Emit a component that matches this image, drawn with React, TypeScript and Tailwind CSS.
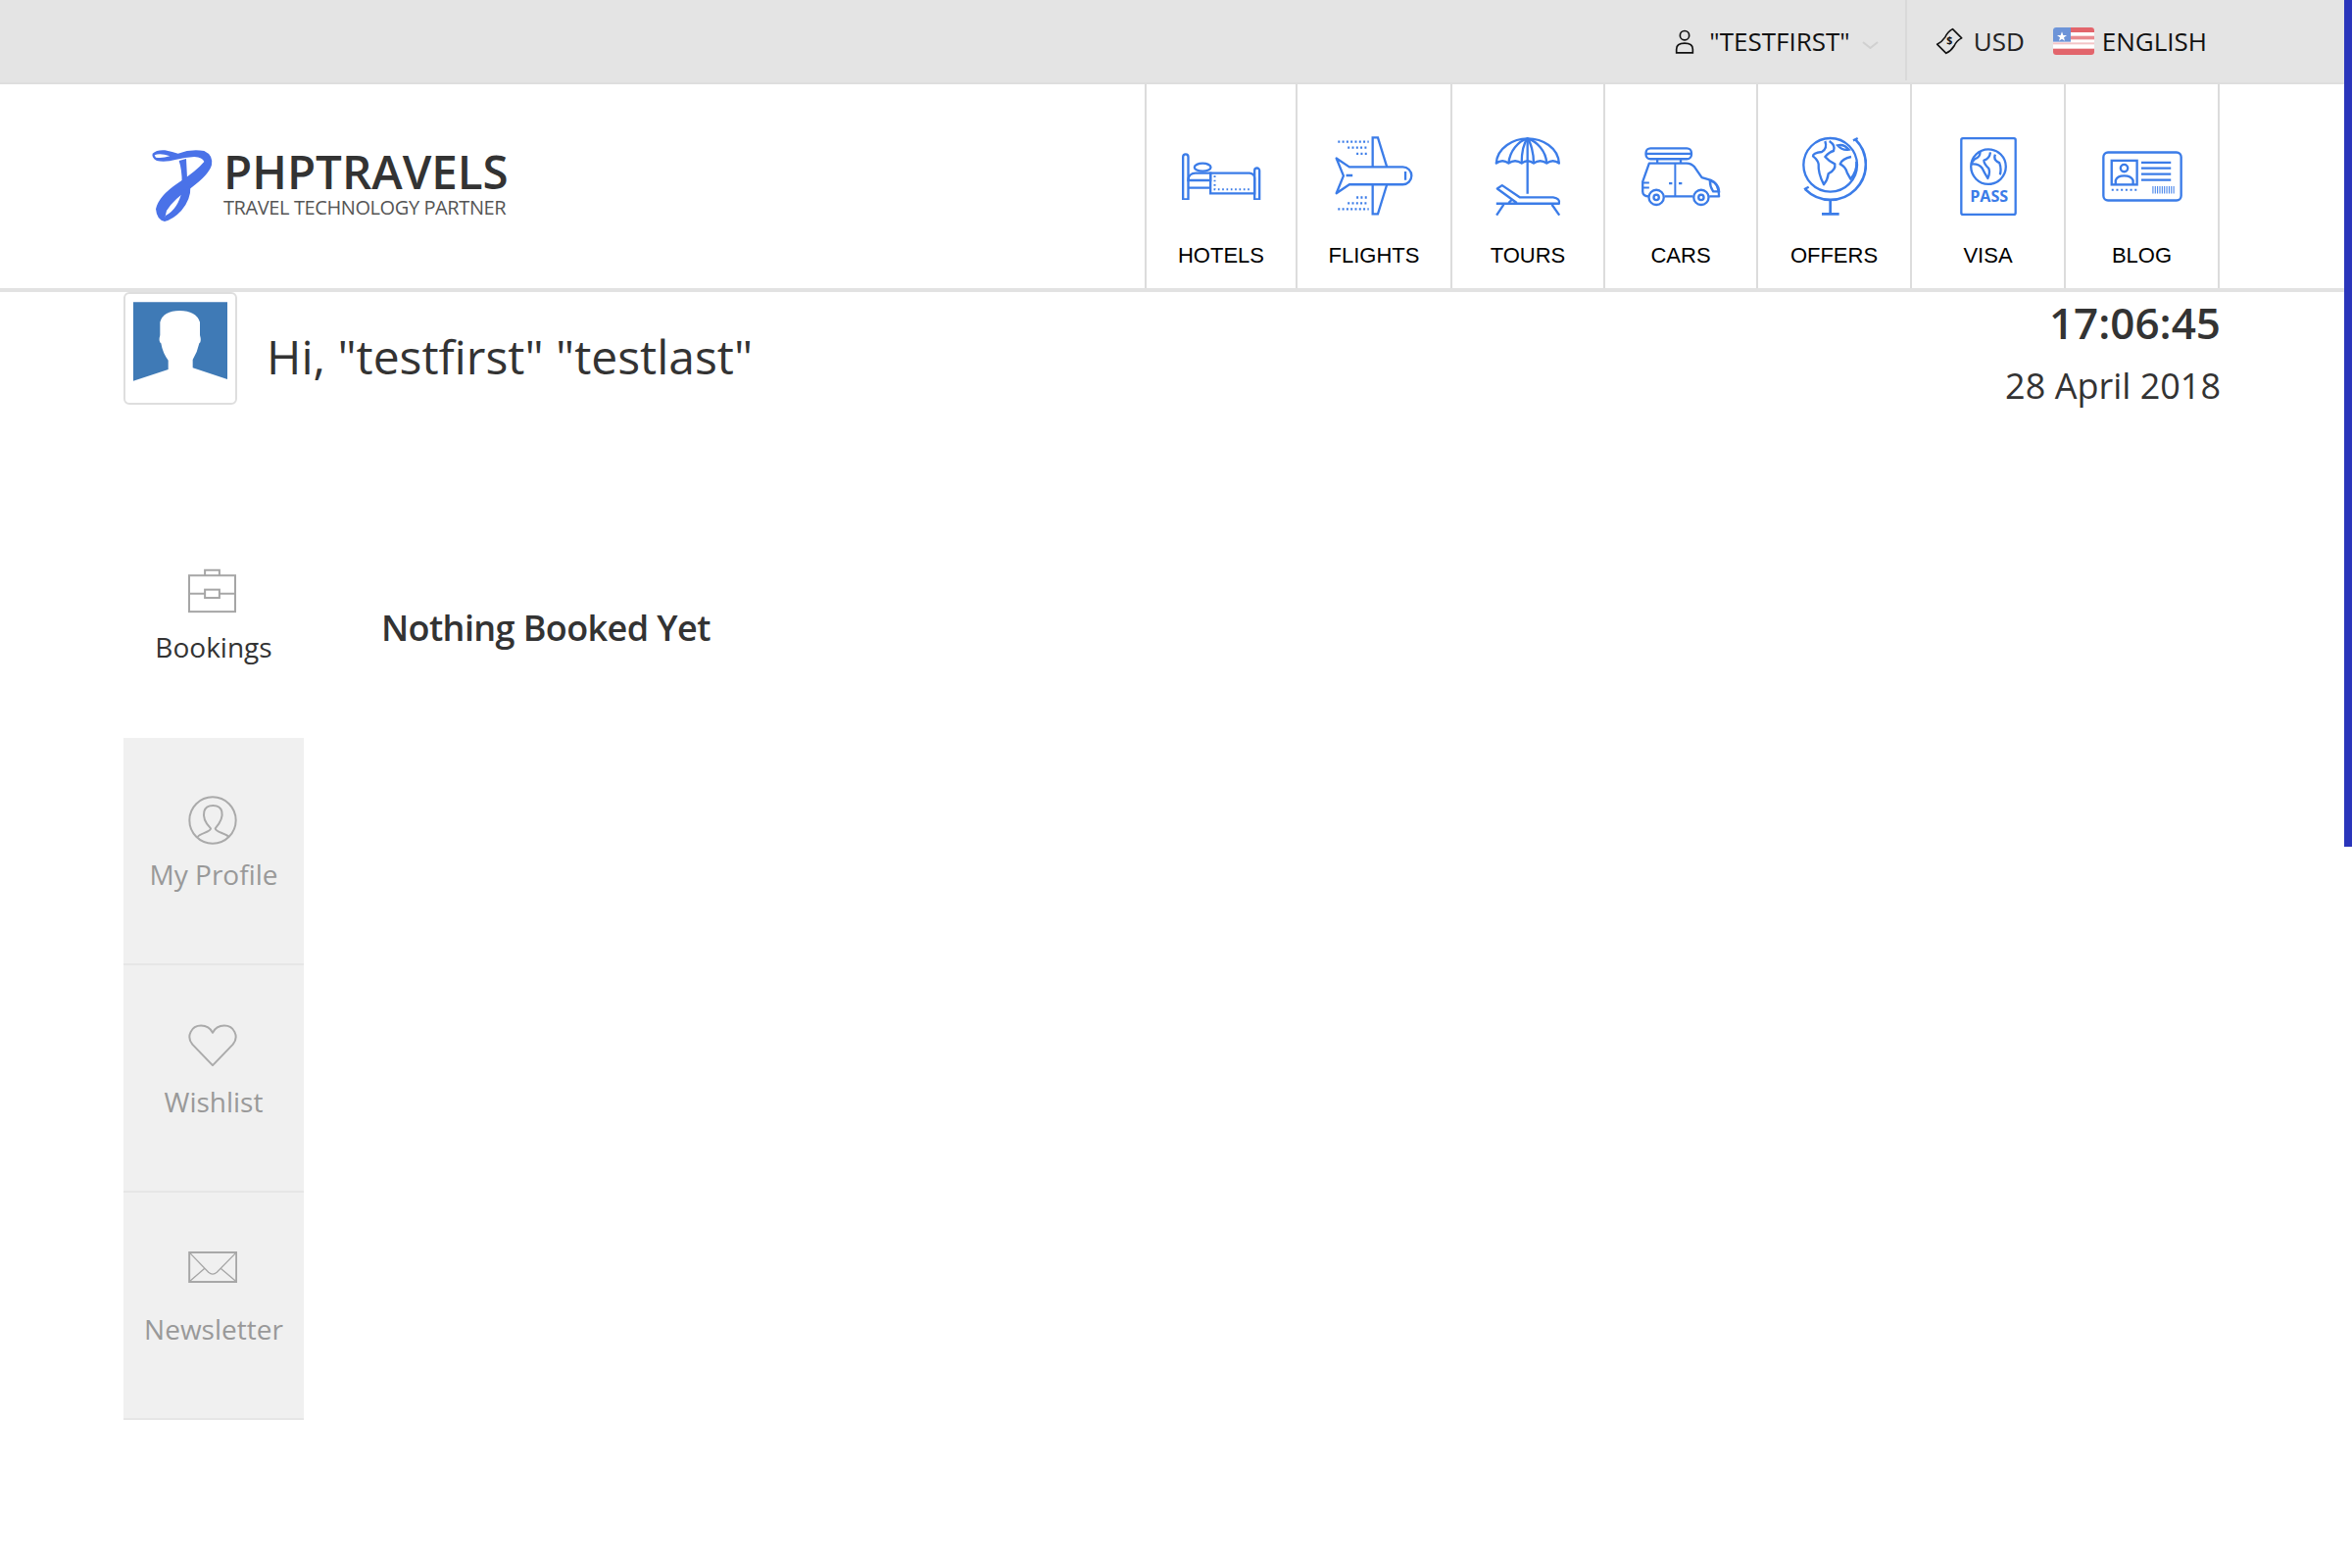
import React from 'react';

const navItems = [
  { label: 'HOTELS', width: 'w-[154px]', icon: <HotelIcon /> },
  { label: 'FLIGHTS', width: 'w-[158px]', icon: <PlaneIcon /> },
  { label: 'TOURS', width: 'w-[156px]', icon: <UmbrellaIcon /> },
  { label: 'CARS', width: 'w-[156px]', icon: <CarIcon /> },
  { label: 'OFFERS', width: 'w-[157px]', icon: <GlobeIcon /> },
  { label: 'VISA', width: 'w-[157px]', icon: <PassIcon /> },
  { label: 'BLOG', width: 'w-[159px]', icon: <CardIcon /> },
];

function HotelIcon() {
  return (
    <svg width="82" height="48" viewBox="135 228 245 144" fill="none" stroke="#3b7ce8" strokeWidth="7">
      <path d="M141 370V240a8 8 0 0 1 16 0V370Z" />
      <path d="M360 370V282a7.5 7.5 0 0 1 15 0V370Z" />
      <path d="M157 335H225M225 290H345Q360 292 360 305V352H225Z" />
      <path d="M157 312c0-14 10-22 22-22H225V312Z" />
      <ellipse cx="201" cy="272" rx="25" ry="12" fill="#fff" />
      <path d="M238 298V340H348" strokeWidth="6" strokeDasharray="5 8" />
    </svg>
  );
}

function PlaneIcon() {
  return (
    <svg width="80" height="82" viewBox="605 180 242 244" fill="none" stroke="#3b7ce8" strokeWidth="7">
      <path d="M650 273H815a27 27 0 0 1 0 54H650L610 354L632 300L610 246Z" strokeLinejoin="round" />
      <path d="M722 273V182H738L766 273M722 327V418H738L766 327" />
      <path d="M640 299H660M823 287V313" />
      <path d="M615 195H710M645 213H710M672 232H710M672 367H710M645 385H710M615 403H710" strokeDasharray="6 7" />
    </svg>
  );
}

function UmbrellaIcon() {
  return (
    <svg width="68" height="81" viewBox="1092 178 204 244" fill="none" stroke="#3b7ce8" strokeWidth="7">
      <path d="M1097 258C1100 210 1150 182 1193 182C1240 182 1287 210 1290 258Q1271 244 1252 258Q1232 244 1212 258Q1193 244 1175 258Q1155 244 1135 258Q1116 244 1097 258Z" strokeLinejoin="round" />
      <path d="M1135 258C1138 220 1165 190 1193 182C1221 190 1250 220 1252 258M1175 258C1175 225 1183 195 1193 182C1203 195 1212 225 1212 258" />
      <path d="M1193 182V352" />
      <path d="M1097 382H1290Q1294 366 1272 363H1170L1115 326L1100 336L1160 380" strokeLinejoin="round" />
      <path d="M1120 385L1098 418M1268 385L1291 418M1135 380L1145 370" />
    </svg>
  );
}

function CarIcon() {
  return (
    <svg width="82" height="61" viewBox="310 208 244 184" fill="none" stroke="#3b7ce8" strokeWidth="7">
      <rect x="325" y="212" width="140" height="33" rx="14" />
      <path d="M325 229H465M360 245V258M432 245V258" />
      <path d="M335 360Q315 360 315 345V315L335 258H450Q465 258 475 270L497 302L525 310Q550 320 550 360H520M470 360H382" strokeLinejoin="round" />
      <path d="M522 312Q548 318 550 345H532Q522 330 522 312Z" />
      <path d="M415 258V360M315 318H335M315 333H335" strokeWidth="6" />
      <circle cx="357" cy="363" r="23" fill="#fff" />
      <circle cx="357" cy="363" r="8" />
      <circle cx="495" cy="363" r="23" fill="#fff" />
      <circle cx="495" cy="363" r="8" />
      <path d="M396 320H406M426 320H436" />
    </svg>
  );
}

function GlobeIcon() {
  return (
    <svg width="66" height="82" viewBox="802 178 198 244" fill="none" stroke="#3b7ce8" strokeWidth="7">
      <circle cx="888" cy="265" r="82" />
      <path d="M965 187A108 108 0 0 1 812 340" strokeWidth="8" />
      <path d="M958 190L972 183M808 340L822 332" />
      <path d="M888 372V415M862 415H915" strokeWidth="8" />
      <path d="M872 192Q880 215 862 225Q835 228 835 238Q850 250 852 262Q850 290 868 325Q880 310 882 292Q905 280 902 262Q885 255 872 240Q885 225 898 222Q905 205 885 192" strokeLinejoin="round" />
      <path d="M910 205Q930 200 945 218Q925 222 910 205Z" />
      <path d="M952 240Q925 245 918 262Q935 270 940 290L950 308Q970 285 968 255" strokeLinejoin="round" />
    </svg>
  );
}

function PassIcon() {
  return (
    <svg width="58" height="82" viewBox="176 178 176 244" fill="none" stroke="#3b7ce8" strokeWidth="7">
      <rect x="180" y="182" width="168" height="236" rx="5" />
      <circle cx="264" cy="270" r="54" />
      <path d="M238 222Q240 240 222 246Q212 256 212 262Q235 260 245 275Q252 290 262 306Q270 290 265 275Q250 262 250 250Q268 245 270 225M285 232Q278 250 298 258Q305 275 300 295" strokeLinejoin="round" />
      <text x="266" y="380" textAnchor="middle" fill="#3b7ce8" stroke="none" fontSize="49" fontWeight="700" fontFamily="'Open Sans', sans-serif">PASS</text>
    </svg>
  );
}

function CardIcon() {
  return (
    <svg width="82" height="52" viewBox="616 223 244 154" fill="none" stroke="#3b7ce8" strokeWidth="7">
      <rect x="620" y="227" width="236" height="146" rx="14" />
      <rect x="645" y="252" width="77" height="73" />
      <circle cx="683" cy="275" r="11" />
      <path d="M657 325V312Q662 298 683 298Q704 298 710 312V325" />
      <path d="M735 258H825M735 275H825M735 293H825M735 311H825" />
      <path d="M645 341H722" strokeWidth="6" strokeDasharray="6 8" />
      <path d="M769 341H838" strokeWidth="22" strokeDasharray="3 4" />
    </svg>
  );
}

function Logo() {
  return (
    <svg width="80" height="95" viewBox="0 0 240 285" fill="#4a72e8">
      <path d="M32 50Q45 38 70 40Q95 45 110 50Q150 35 190 42Q218 55 213 85Q205 115 150 155Q95 190 75 225Q70 240 70 258Q45 255 42 220Q50 180 110 140Q165 105 190 75Q185 62 160 60Q130 62 105 68Q70 78 45 72Q28 62 32 50Z" />
      <path d="M38 55Q55 48 85 58Q60 66 42 62Z" fill="#fff" />
      <path d="M113 72L135 66L138 125L122 138Q122 100 113 72Z" />
      <path d="M122 165L148 150Q150 190 120 225Q95 252 68 258Q65 250 72 240Q110 220 122 165Z" />
    </svg>
  );
}

function UserIcon() {
  return (
    <svg width="20" height="25" viewBox="40 58 60 74" fill="none" stroke="#111" strokeWidth="5">
      <circle cx="70" cy="76" r="14" />
      <path d="M45 129V118Q45 100 70 100Q95 100 95 118V129Z" />
    </svg>
  );
}

function CurrencyIcon() {
  return (
    <svg width="29" height="29" viewBox="52 55 88 88" fill="none" stroke="#111" strokeWidth="5">
      <path d="M105 60L133 88Q118 95 110 112Q100 128 85 135L57 107Q72 100 82 85Q90 68 105 60Z" strokeLinejoin="round" />
      <text x="95" y="108" textAnchor="middle" fill="#111" stroke="none" fontSize="32" fontWeight="700" fontFamily="'Open Sans', sans-serif">$</text>
    </svg>
  );
}

function FlagIcon() {
  return (
    <svg width="42" height="28" viewBox="408 66 126 84" className="rounded-[3px]">
      <rect x="408" y="66" width="126" height="84" fill="#fff" />
      <rect x="462" y="66" width="72" height="15" fill="#e2656c" />
      <rect x="462" y="92" width="72" height="11" fill="#e98a8f" />
      <rect x="408" y="131" width="126" height="19" fill="#e2656c" />
      <rect x="408" y="112" width="126" height="6" fill="#f3c4c6" />
      <rect x="408" y="66" width="54" height="44" fill="#6d94d8" />
      <path d="M435 79L439 90H450L441 97L444 107L435 101L426 107L429 97L420 90H431Z" fill="#fff" />
    </svg>
  );
}

function BriefcaseIcon() {
  return (
    <svg width="49" height="46" viewBox="245 66 146 132" fill="none" stroke="#a6a6a6" strokeWidth="6">
      <rect x="248" y="85" width="140" height="110" />
      <path d="M296 85V69H340V85M248 140H296M340 140H388" />
      <rect x="296" y="128" width="44" height="25" />
    </svg>
  );
}

function ProfileIcon() {
  return (
    <svg width="50" height="50" viewBox="243 758 150 150" fill="none" stroke="#aaa" strokeWidth="6">
      <circle cx="318" cy="833" r="71" />
      <path d="M272 884C280 872 312 870 312 858C296 842 288 822 292 806C298 782 340 782 346 806C350 822 340 842 326 858C326 870 358 872 368 884" />
    </svg>
  );
}

function HeartIcon() {
  return (
    <svg width="50" height="44" viewBox="245 258 152 132" fill="none" stroke="#aaa" strokeWidth="6">
      <path d="M321 385L258 320C238 295 255 262 285 262C302 262 315 272 321 284C327 272 340 262 357 262C387 262 404 295 384 320Z" strokeLinejoin="round" />
    </svg>
  );
}

function EnvelopeIcon() {
  return (
    <svg width="50" height="32" viewBox="245 953 152 98" fill="none" stroke="#a6a6a6" strokeWidth="6">
      <rect x="248" y="956" width="147" height="92" />
      <path d="M250 958L308 1018Q321 1030 334 1018L393 958M250 1046L296 1006M393 1046L346 1006" strokeWidth="4" />
    </svg>
  );
}

function Silhouette() {
  return (
    <svg width="96" height="84" viewBox="108 564 288 250">
      <path d="M108 564H396V800L290 765V740Q305 715 310 690Q318 685 312 665V625Q300 590 250 590Q200 590 190 625V665Q184 685 193 690Q198 720 215 742V770L108 805Z" fill="#3f7ab6" />
    </svg>
  );
}

const sideItems = [
  { label: 'My Profile', icon: <ProfileIcon />, iconGap: 'pt-[60px]', textGap: 'mt-[11px]' },
  { label: 'Wishlist', icon: <HeartIcon />, iconGap: 'pt-[58px]', textGap: 'mt-[13px]' },
  { label: 'Newsletter', icon: <EnvelopeIcon />, iconGap: 'pt-[52px]', textGap: 'mt-[19px]' },
];

export default function App() {
  return (
    <div className="relative min-h-[1600px] bg-white font-['Open_Sans',sans-serif] text-[#333]">
      {/* page scrollbar */}
      <div className="absolute right-0 top-0 h-[864px] w-2 bg-[#2a35bb]" />

      {/* Top bar */}
      <div className="flex h-[86px] items-center justify-end border-b-2 border-[#dedede] bg-[#e4e4e4] pr-[148px] text-[26px] text-[#111]">
        <UserIcon />
        <span className="ml-[15px] whitespace-nowrap">"TESTFIRST"</span>
        <svg className="ml-[12px] mt-2" width="17" height="8" viewBox="0 0 17 8" fill="none" stroke="#d0d0d0" strokeWidth="2"><path d="M1 1L8.5 7L16 1" /></svg>
        <div className="ml-[27px] mr-[29px] h-[82px] w-0.5 self-start bg-[#d9d9d9]" />
        <CurrencyIcon />
        <span className="ml-[10px] whitespace-nowrap font-medium text-[#222]">USD</span>
        <span className="ml-[29px] flex"><FlagIcon /></span>
        <span className="ml-[8px] whitespace-nowrap">ENGLISH</span>
      </div>

      {/* Header */}
      <div className="flex h-[212px] items-stretch justify-between border-b-4 border-[#e2e2e2] pl-[145px] pr-[135px]">
        <div className="flex items-center pb-[6px]">
          <Logo />
          <div className="ml-[3px] flex flex-col">
            <span className="text-[47.5px] font-semibold leading-[50px] text-[#333]">PHPTRAVELS</span>
            <span className="text-[20px] leading-[24px] tracking-[-0.4px] text-[#555]">TRAVEL TECHNOLOGY PARTNER</span>
          </div>
        </div>
        <div className="flex">
          {navItems.map((item) => (
            <div key={item.label} className={`flex flex-col items-center border-l-2 border-[#dcdcdc] last:border-r-2 ${item.width}`}>
              <div className="mt-[54px] flex h-20 items-center justify-center">{item.icon}</div>
              <span className="mt-[28px] font-['Liberation_Sans',sans-serif] text-[22px] leading-[26px] text-black">{item.label}</span>
            </div>
          ))}
        </div>
      </div>

      {/* Welcome row */}
      <div className="flex items-start justify-between pl-[126px] pr-[134px]">
        <div className="flex items-center">
          <div className="h-[115px] w-[116px] rounded-md border-2 border-[#dedede] pl-2 pt-2">
            <Silhouette />
          </div>
          <h1 className="ml-[30px] mt-[16px] text-[48px] font-normal leading-none">Hi, "testfirst" "testlast"</h1>
        </div>
        <div className="flex flex-col items-end">
          <span className="mt-[3px] text-[44px] font-semibold leading-[56px]">17:06:45</span>
          <span className="mt-[11px] text-[36px] leading-[52px]">28 April 2018</span>
        </div>
      </div>

      {/* Body */}
      <div className="mt-[101px] flex pl-[126px]">
        <div className="w-[184px]">
          <div className="flex h-[232px] flex-col items-center pt-[58px]">
            <div className="mr-[3px] flex h-12 items-center"><BriefcaseIcon /></div>
            <span className="mt-[13px] text-[28px] leading-[40px]">Bookings</span>
          </div>
          {sideItems.map((item) => (
            <div key={item.label} className={`flex h-[232px] flex-col items-center border-b-2 border-[#e6e6e6] bg-[#f0f0f0] text-[#999] ${item.iconGap}`}>
              <div className="mr-[3px] flex h-12 items-center">{item.icon}</div>
              <span className={`text-[28px] leading-[40px] ${item.textGap}`}>{item.label}</span>
            </div>
          ))}
        </div>
        <h2 className="ml-[79px] mt-[97px] text-[36px] font-semibold leading-[46px] tracking-[-0.6px]">Nothing Booked Yet</h2>
      </div>
    </div>
  );
}
